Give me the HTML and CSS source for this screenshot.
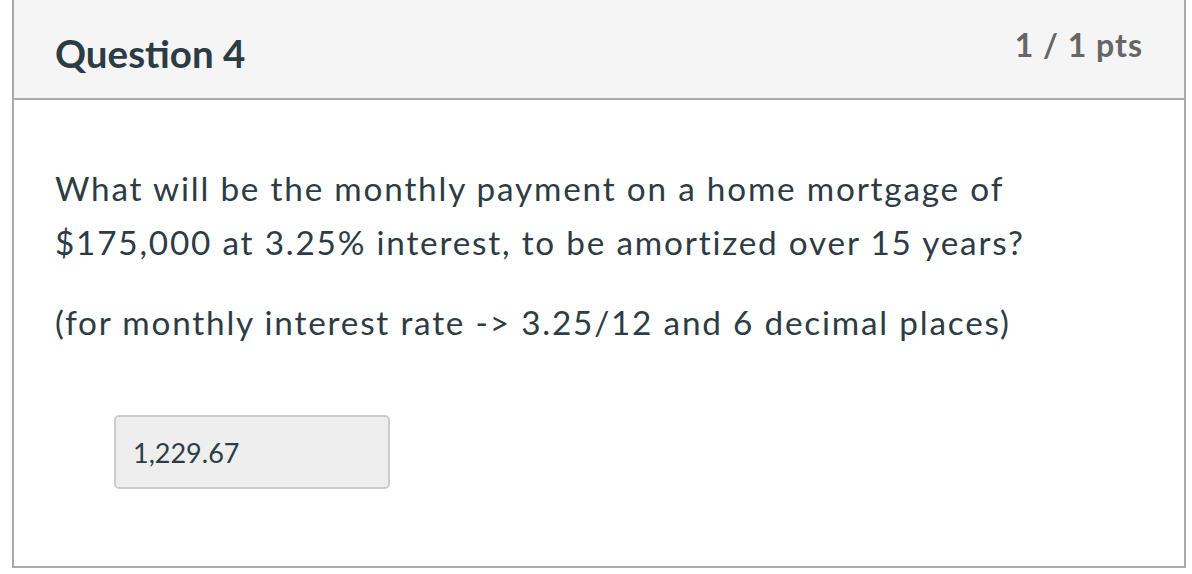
FILE: index.html
```html
<!DOCTYPE html>
<html>
<head>
    <title>Question 4</title>
    <link rel="stylesheet" href="styles.css">
</head>
<body>
    <div class="question">
        <div class="header">
            <h2 class="title">Question 4</h2>
            <div class="points">1 / 1 pts</div>
        </div>
        <div class="content">
            <p>What will be the monthly payment on a home mortgage of $175,000 at 3.25% interest, to be amortized over 15 years?</p>
            <p>(for monthly interest rate -&gt; 3.25/12 and 6 decimal places)</p>
            <div class="answer">1,229.67</div>
        </div>
    </div>
</body>
</html>
```

FILE: styles.css
```css
body {
    font-family: 'Lato', 'Liberation Sans', sans-serif;
    background-color: #fff;
    color: #2d3b45;
    margin: 0;
    padding: 0;
}
.question {
    width: 1174px;
    margin-left: 12px;
    box-sizing: border-box;
    border: 2px solid #aaa;
    border-top: none;
}
.header {
    display: flex;
    justify-content: space-between;
    align-items: flex-start;
    height: 98px;
    padding: 0 41px 0 41px;
    background-color: #f5f5f5;
    border-bottom: 2px solid #aaa;
}
.title {
    margin: 30px 0 0 0;
    font-size: 38.5px;
    font-weight: bold;
    line-height: 46px;
}
.points {
    margin-top: 26px;
    font-size: 32px;
    font-weight: bold;
    letter-spacing: 1px;
    color: #666;
    line-height: 38px;
}
.content {
    padding: 61px 41px 77px 41px;
}
.content p {
    margin: 0 0 26px 0;
    font-size: 33.3px;
    letter-spacing: 1.8px;
    line-height: 54px;
}
.answer {
    width: 276px;
    height: 74px;
    box-sizing: border-box;
    margin: 66px 0 0 59px;
    padding: 0 17px;
    display: flex;
    align-items: center;
    background-color: #eee;
    border: 2px solid #ccc;
    border-radius: 5px;
    font-size: 27px;
}
```
